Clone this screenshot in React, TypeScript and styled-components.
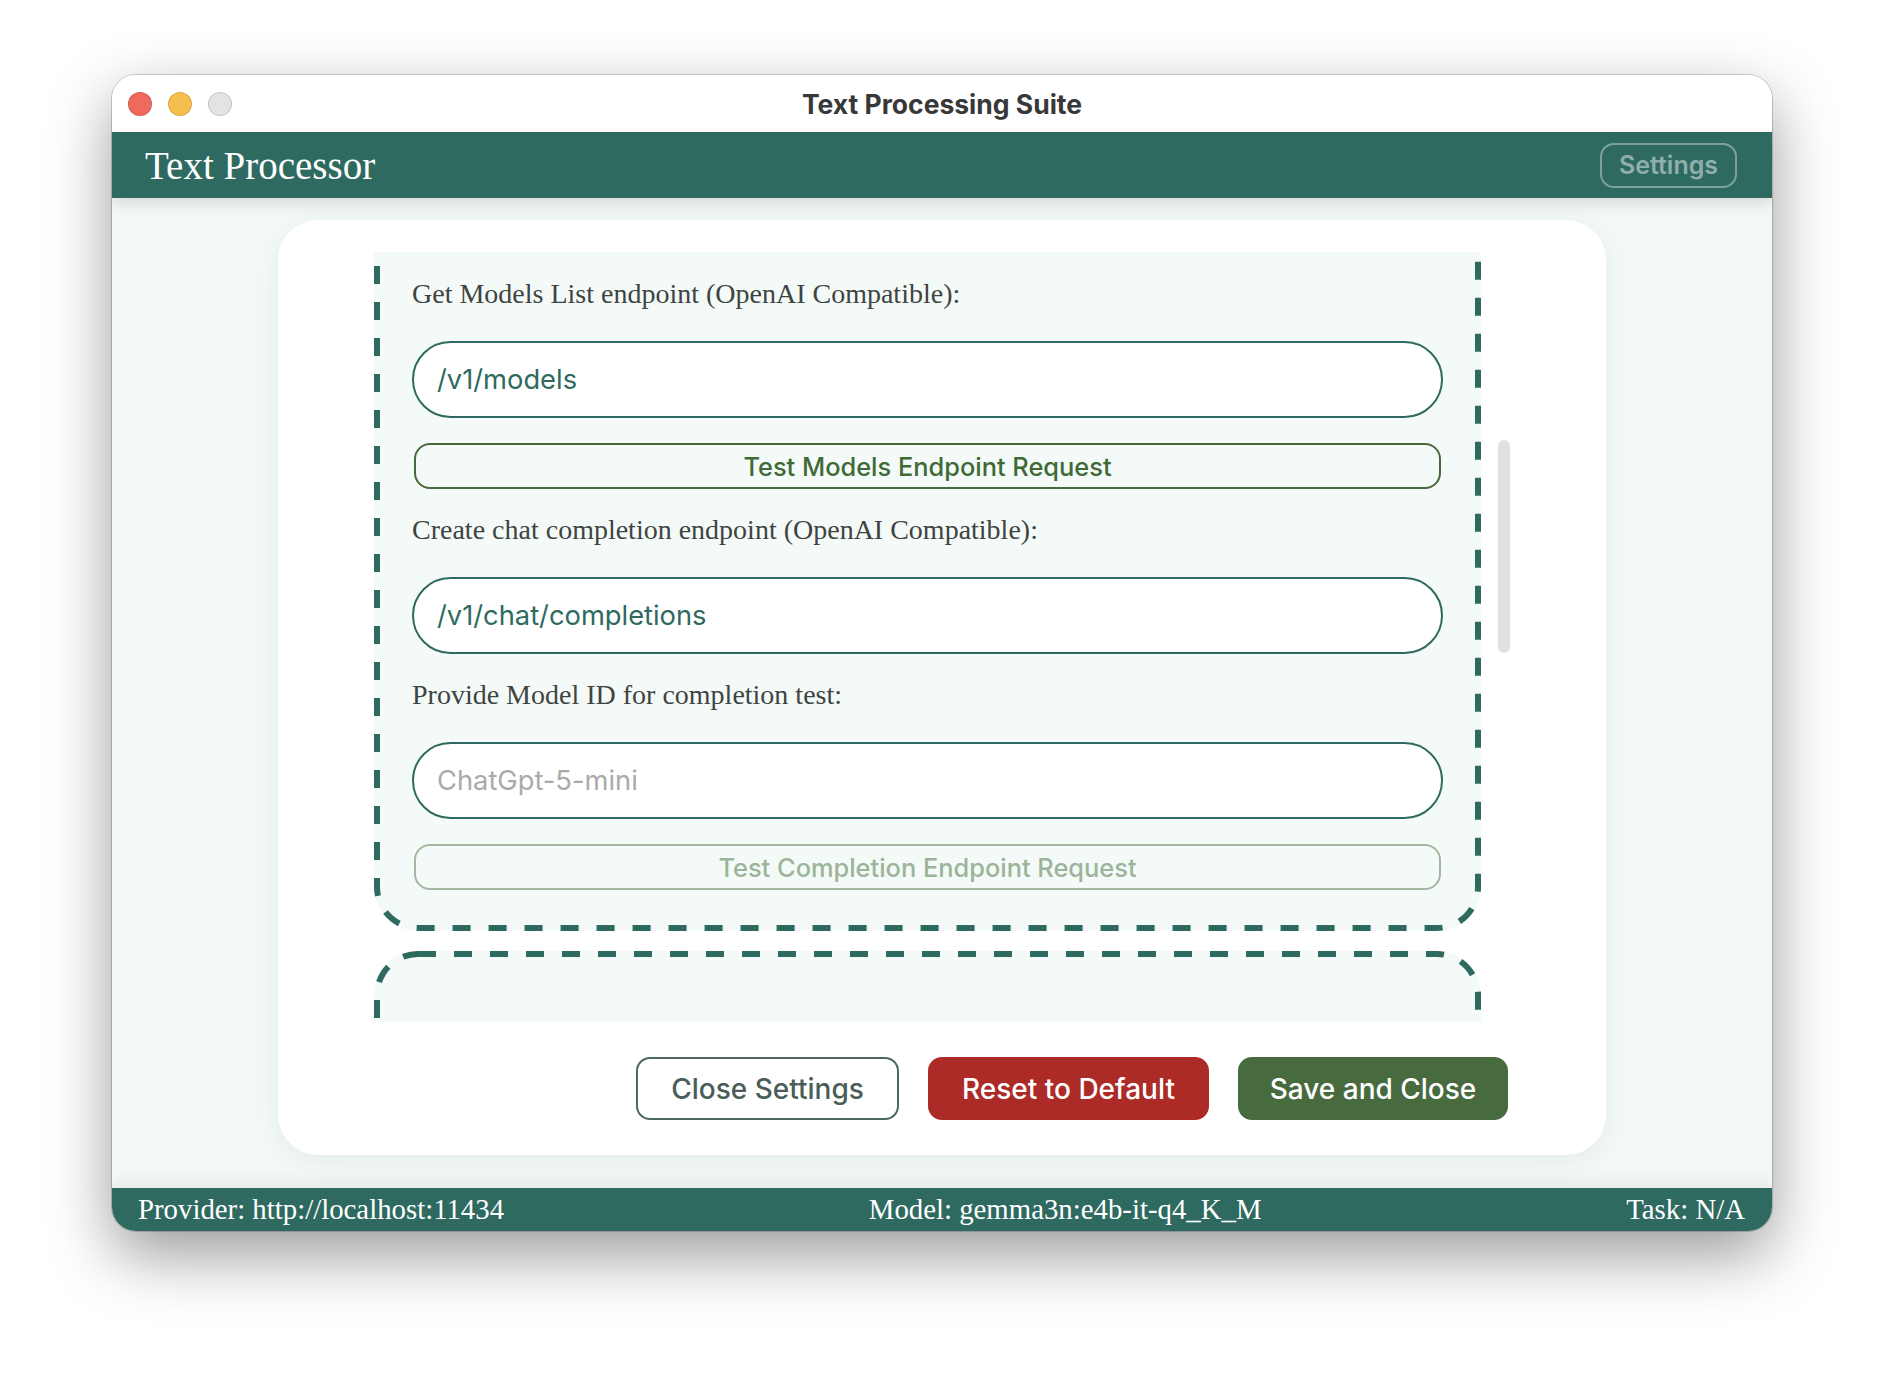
import React, { useLayoutEffect, useRef, useState } from 'react'
import styled, { createGlobalStyle } from 'styled-components'

const GlobalStyle = createGlobalStyle`
  html, body {
    margin: 0;
    padding: 0;
    background: #ffffff;
  }
  * {
    box-sizing: border-box;
  }
`

const GREEN = '#2e6a5f'
const DASH = 6

const Page = styled.div`
  width: 1884px;
  height: 1380px;
  padding: 75px 112px 0;
  overflow: hidden;
`

const Window = styled.div`
  width: 1660px;
  height: 1156px;
  border-radius: 24px;
  overflow: hidden;
  display: flex;
  flex-direction: column;
  background: #fff;
  box-shadow: 0 0 0 1px rgba(0, 0, 0, 0.18), 0 24px 64px rgba(0, 0, 0, 0.4);
`

const TitleBar = styled.div`
  height: 57px;
  flex: none;
  display: grid;
  grid-template-columns: 1fr auto 1fr;
  align-items: center;
  padding: 0 16px;
  background: #fff;
`

const Lights = styled.div`
  display: flex;
  gap: 16px;
`

const Light = styled.span<{ $color: string; $edge: string }>`
  width: 24px;
  height: 24px;
  border-radius: 50%;
  background: ${(p) => p.$color};
  box-shadow: inset 0 0 0 1px ${(p) => p.$edge};
`

const WindowTitle = styled.div`
  font-family: Inter, 'Liberation Sans', sans-serif;
  font-weight: 700;
  font-size: 26.5px;
  color: #383838;
`

const Header = styled.header`
  height: 66px;
  flex: none;
  display: flex;
  align-items: center;
  justify-content: space-between;
  padding: 0 35px 0 33px;
  background: ${GREEN};
  position: relative;
  z-index: 2;
  box-shadow: 0 6px 14px rgba(0, 0, 0, 0.12);
`

const AppTitle = styled.h1`
  margin: 0;
  font-family: 'Liberation Serif', 'Times New Roman', serif;
  font-weight: normal;
  font-size: 39px;
  color: #fff;
`

const SettingsButton = styled.button`
  width: 137px;
  height: 45px;
  border: 2px solid rgba(255, 255, 255, 0.38);
  border-radius: 14px;
  background: transparent;
  color: rgba(255, 255, 255, 0.48);
  font-family: Inter, 'Liberation Sans', sans-serif;
  font-weight: 600;
  font-size: 25px;
  padding: 0;
`

const Main = styled.main`
  flex: 1;
  display: flex;
  padding: 22px 166px 33px;
  background: #f3f9f7;
`

const Card = styled.section`
  flex: 1;
  display: flex;
  flex-direction: column;
  gap: 35px;
  padding: 32px 96px 35px;
  background: #fff;
  border-radius: 40px;
  box-shadow: 0 6px 30px rgba(0, 0, 0, 0.06);
`

const ScrollFrame = styled.div`
  position: relative;
  height: 770px;
  flex: none;
`

const Scroller = styled.div`
  height: 100%;
  overflow: hidden;
  padding-right: 29px;
`

const Thumb = styled.div`
  position: absolute;
  right: 0;
  top: 188px;
  width: 12px;
  height: 213px;
  border-radius: 6px;
  background: #e1e1e1;
`

const Section = styled.div<{ $top?: number }>`
  position: relative;
  display: flex;
  flex-direction: column;
  gap: 25px;
  padding: ${(p) => p.$top ?? 38}px 38px 41px;
  margin-bottom: 20px;
  border-radius: 44px;
  background: #f4faf8;
`

// dashed outline drawn over the section edge, 18px dashes like the reference
const DashOutline = styled.svg`
  position: absolute;
  left: 0;
  top: 0;
  pointer-events: none;
`

const Label = styled.label<{ $spaced?: boolean }>`
  display: block;
  margin: ${(p) => (p.$spaced ? '14px' : '0')} 0 6px;
  font-family: 'Liberation Serif', 'Times New Roman', serif;
  font-size: 28px;
  line-height: 32px;
  color: #3e4441;
`

const TextInput = styled.input`
  display: block;
  width: 100%;
  height: 77px;
  padding: 0 23px;
  border: 2px solid ${GREEN};
  border-radius: 40px;
  background: #fff;
  outline: none;
  font-family: Inter, 'Liberation Sans', sans-serif;
  font-size: 27.3px;
  color: ${GREEN};

  &::placeholder {
    color: #aaaaaa;
  }
`

const TestButton = styled.button`
  height: 46px;
  margin: 0 2px;
  border: 2px solid ${(p) => (p.disabled ? '#a3b8a0' : '#48693d')};
  border-radius: 16px;
  background: transparent;
  color: ${(p) => (p.disabled ? '#9cb499' : '#3f6a36')};
  font-family: Inter, 'Liberation Sans', sans-serif;
  font-weight: 500;
  font-size: 25.4px;
  padding: 0;
`

const ButtonRow = styled.div`
  display: flex;
  justify-content: flex-end;
  gap: 29px;
  padding-right: 2px;
`

const variants = {
  outline: { bg: '#ffffff', fg: '#4a5d58', border: '#4d6862' },
  danger: { bg: '#ad2b27', fg: '#ffffff', border: '#ad2b27' },
  primary: { bg: '#476a3e', fg: '#ffffff', border: '#476a3e' },
}

const DialogButton = styled.button<{ $variant: keyof typeof variants; $width: number }>`
  width: ${(p) => p.$width}px;
  height: 63px;
  border: 2px solid ${(p) => variants[p.$variant].border};
  border-radius: 14px;
  background: ${(p) => variants[p.$variant].bg};
  color: ${(p) => variants[p.$variant].fg};
  font-family: Inter, 'Liberation Sans', sans-serif;
  font-weight: 500;
  font-size: 28px;
  padding: 0;
`

const Footer = styled.footer`
  height: 43px;
  flex: none;
  display: flex;
  align-items: center;
  justify-content: space-between;
  padding: 0 27px 0 26px;
  background: ${GREEN};
  position: relative;
  box-shadow: 0 -6px 16px rgba(0, 0, 0, 0.07);
  font-family: 'Liberation Serif', 'Times New Roman', serif;
  font-size: 28.8px;
  color: #fff;
`

const SettingsSection = ({ top, children }: { top?: number; children: React.ReactNode }) => {
  const ref = useRef<HTMLDivElement>(null)
  const [size, setSize] = useState({ w: 0, h: 0 })

  useLayoutEffect(() => {
    if (ref.current) {
      setSize({ w: ref.current.offsetWidth, h: ref.current.offsetHeight })
    }
  }, [])

  return (
    <Section ref={ref} $top={top}>
      {size.w > 0 && (
        <DashOutline width={size.w} height={size.h}>
          <rect
            x={DASH / 2}
            y={DASH / 2}
            width={size.w - DASH}
            height={size.h - DASH}
            rx={44 - DASH / 2}
            fill='none'
            stroke={GREEN}
            strokeWidth={DASH}
            strokeDasharray='18 18'
          />
        </DashOutline>
      )}
      {children}
    </Section>
  )
}

export default function App() {
  const scrollerRef = useRef<HTMLDivElement>(null)
  const anchorRef = useRef<HTMLLabelElement>(null)

  // the settings list is scrolled down to the endpoint fields
  useLayoutEffect(() => {
    const scroller = scrollerRef.current
    const anchor = anchorRef.current
    if (scroller && anchor) {
      const offset = anchor.getBoundingClientRect().top - scroller.getBoundingClientRect().top
      scroller.scrollTop = offset - 26
    }
  }, [])

  return (
    <>
      <GlobalStyle />
      <Page>
        <Window>
          <TitleBar>
            <Lights>
              <Light $color='#ee6a5f' $edge='rgba(0,0,0,0.12)' />
              <Light $color='#f5bf4f' $edge='rgba(0,0,0,0.1)' />
              <Light $color='#e3e3e3' $edge='rgba(0,0,0,0.12)' />
            </Lights>
            <WindowTitle>Text Processing Suite</WindowTitle>
            <div />
          </TitleBar>
          <Header>
            <AppTitle>Text Processor</AppTitle>
            <SettingsButton>Settings</SettingsButton>
          </Header>
          <Main>
            <Card>
              <ScrollFrame>
                <Scroller ref={scrollerRef}>
                  <SettingsSection>
                    <Label>Provider base URL:</Label>
                    <TextInput readOnly value='http://localhost:11434' />
                    <TestButton>Test Connection</TestButton>
                    <Label>API key (optional):</Label>
                    <TextInput readOnly placeholder='sk-...' />
                    <Label ref={anchorRef} $spaced>
                      Get Models List endpoint (OpenAI Compatible):
                    </Label>
                    <TextInput readOnly value='/v1/models' />
                    <TestButton>Test Models Endpoint Request</TestButton>
                    <Label>Create chat completion endpoint (OpenAI Compatible):</Label>
                    <TextInput readOnly value='/v1/chat/completions' />
                    <Label>Provide Model ID for completion test:</Label>
                    <TextInput readOnly placeholder='ChatGpt-5-mini' />
                    <TestButton disabled>Test Completion Endpoint Request</TestButton>
                  </SettingsSection>
                  <SettingsSection top={96}>
                    <Label>Default model:</Label>
                    <TextInput readOnly value='gemma3n:e4b-it-q4_K_M' />
                    <Label>Request timeout (seconds):</Label>
                    <TextInput readOnly value='120' />
                  </SettingsSection>
                </Scroller>
                <Thumb />
              </ScrollFrame>
              <ButtonRow>
                <DialogButton $variant='outline' $width={263}>Close Settings</DialogButton>
                <DialogButton $variant='danger' $width={281}>Reset to Default</DialogButton>
                <DialogButton $variant='primary' $width={270}>Save and Close</DialogButton>
              </ButtonRow>
            </Card>
          </Main>
          <Footer>
            <span>Provider: http://localhost:11434</span>
            <span>Model: gemma3n:e4b-it-q4_K_M</span>
            <span>Task: N/A</span>
          </Footer>
        </Window>
      </Page>
    </>
  )
}
